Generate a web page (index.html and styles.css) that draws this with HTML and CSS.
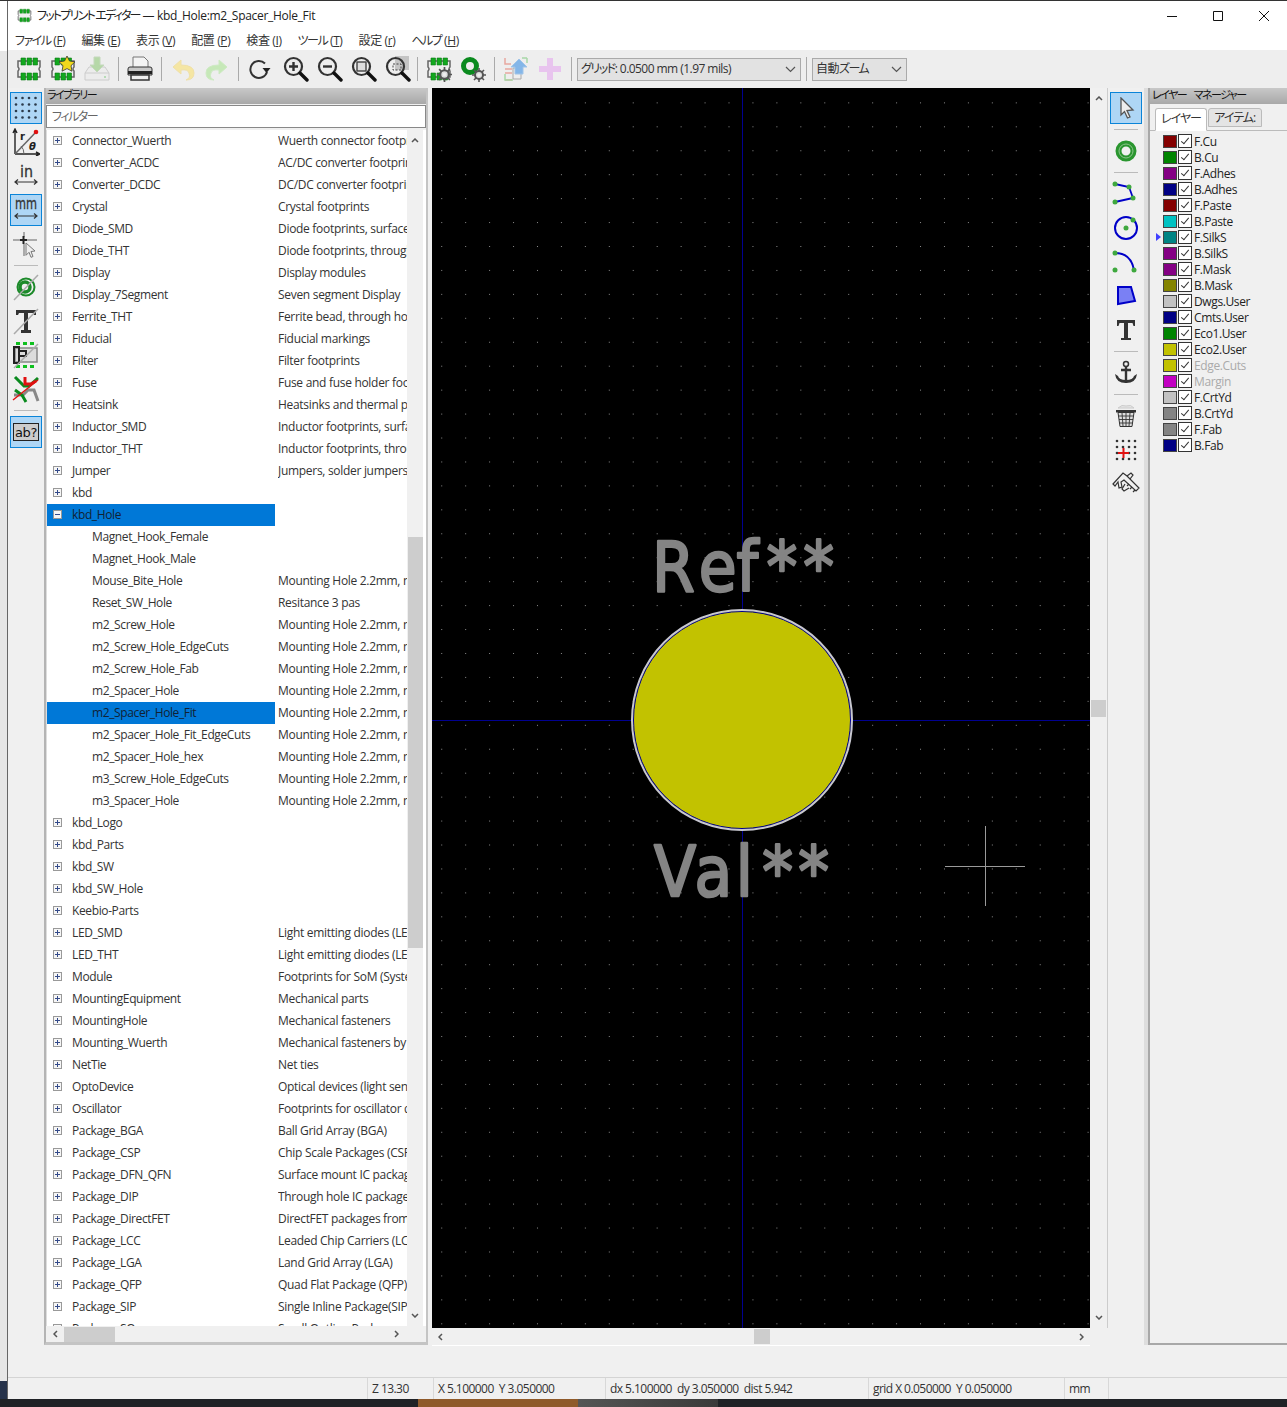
FILE: index.html
```html
<!DOCTYPE html>
<html lang="ja">
<head>
  <meta charset="UTF-8">
  <title>フットプリント エディター — kbd_Hole:m2_Spacer_Hole_Fit</title>
  <link rel="stylesheet" href="styles.css">
</head>
<body>
  <svg class="defs" width="0" height="0">
    <defs>
      <symbol id="chip" viewBox="0 0 26 26">
        <path d="M2 5h22v6q-2 2 0 4v6H2v-6q2-2 0-4z" fill="#efefef" stroke="#666" stroke-width="1.500"/>
        <path d="M5 2h4.500v7H5zM11 2h4.500v7H11zM17 2h4.500v7H17zM5 17h4.500v7H5zM11 17h4.500v7H11zM17 17h4.500v7H17z" fill="#12a81e" stroke="#0b7a14" stroke-width=".6"/>
      </symbol>
      <symbol id="gear" viewBox="0 0 14 14">
        <circle cx="7" cy="7" r="4" fill="#ddd" stroke="#555" stroke-width="2"/>
        <path d="M7 0v3M7 11v3M0 7h3M11 7h3M2 2l2 2M10 10l2 2M12 2l-2 2M4 10l-2 2" stroke="#555" stroke-width="1.600"/>
        <circle cx="7" cy="7" r="1.600" fill="#eee"/>
      </symbol>
      <symbol id="mag" viewBox="0 0 26 26">
        <circle cx="10.500" cy="10.500" r="8.500" fill="none" stroke="#333" stroke-width="2.200"/>
        <path d="M17 17l7 7" stroke="#111" stroke-width="3.400" stroke-linecap="round"/>
      </symbol>
      <symbol id="arrow" viewBox="0 0 8 5">
        <path d="M1 4l3-3 3 3" fill="none" stroke="#555" stroke-width="1.500"/>
      </symbol>
    </defs>
  </svg>

  <div class="desk-top"></div>
  <div class="desk-row">
    <div class="desk-left"></div>
    <div class="window">

      <div class="titlebar">
        <svg class="app-icon" width="15" height="15" viewBox="0 0 26 26"><use href="#chip"/></svg>
        <span class="title-text"><span class="kana">フットプリント エディター</span> — kbd_Hole:m2_Spacer_Hole_Fit</span>
        <div class="win-controls">
          <svg class="win-min" width="46" height="12" viewBox="0 0 46 12"><path d="M18 6.500h10" stroke="#111"/></svg>
          <svg class="win-max" width="46" height="12" viewBox="0 0 46 12"><path d="M18.500 1.500h9v9h-9z" fill="none" stroke="#111"/></svg>
          <svg class="win-close" width="46" height="12" viewBox="0 0 46 12"><path d="M18 1l10 10M28 1L18 11" stroke="#111"/></svg>
        </div>
      </div>

      <div class="menubar">
        <span><span class="kana">ファイル</span> (<u>F</u>)</span>
        <span>編集 (<u>E</u>)</span>
        <span>表示 (<u>V</u>)</span>
        <span>配置 (<u>P</u>)</span>
        <span>検査 (<u>I</u>)</span>
        <span><span class="kana">ツール</span> (<u>T</u>)</span>
        <span>設定 (<u>r</u>)</span>
        <span><span class="kana">ヘルプ</span> (<u>H</u>)</span>
      </div>

      <div class="toolbar">
        <div class="tb-btn"><svg width="26" height="26"><use href="#chip"/></svg></div>
        <div class="tb-btn">
          <svg width="26" height="26" viewBox="0 0 26 26">
            <use href="#chip"/>
            <path d="M17 0l2.500 5 5.500.8-4 3.900 1 5.500-5-2.600-5 2.600 1-5.500-4-3.900 5.500-.8z" fill="#f2d81c" stroke="#333" stroke-width=".8"/>
          </svg>
        </div>
        <div class="tb-btn">
          <svg width="26" height="26" viewBox="0 0 26 26">
            <path d="M1 17l4-6h16l4 6v7H1z" fill="#ececec" stroke="#ccc"/>
            <path d="M1 17h24" stroke="#ccc"/>
            <path d="M10 1h6v8h4l-7 7-7-7h4z" fill="#b6d8a8" stroke="#c4d8bc"/>
            <circle cx="21" cy="21" r="1" fill="#a5d6a5"/>
          </svg>
        </div>
        <div class="tb-sep"></div>
        <div class="tb-btn">
          <svg width="26" height="26" viewBox="0 0 26 26">
            <path d="M6 12V1h11l4 4v7z" fill="#f4f4f4" stroke="#777"/>
            <path d="M1 13q0-2 2-2h20q2 0 2 2v6H1z" fill="#c9c9c9" stroke="#333"/>
            <path d="M1 15h24v3H1z" fill="#222"/>
            <path d="M4 19h18v5H4z" fill="#eee" stroke="#333" stroke-width="1.500"/>
          </svg>
        </div>
        <div class="tb-sep"></div>
        <div class="tb-btn">
          <svg width="24" height="24" viewBox="0 0 24 24"><path d="M10 3L2 10l8 7v-4q7-1 8 3 2 5-3 7 8 0 8-7 0-8-13-8z" fill="#f5e6a3" stroke="#efe0a8"/></svg>
        </div>
        <div class="tb-btn">
          <svg width="24" height="24" viewBox="0 0 24 24"><path d="M14 3l8 7-8 7v-4q-7-1-8 3-2 5 3 7-8 0-8-7 0-8 13-8z" fill="#c6e8b8" stroke="#cdeac2"/></svg>
        </div>
        <div class="tb-sep"></div>
        <div class="tb-btn">
          <svg width="24" height="24" viewBox="0 0 24 24"><path d="M17 6.500A8.500 8.500 0 1 0 19 15" fill="none" stroke="#333" stroke-width="2"/><path d="M14.500 11h8l-4 5z" fill="#222"/></svg>
        </div>
        <div class="tb-btn mag-right">
          <svg width="26" height="26" viewBox="0 0 26 26"><use href="#mag"/><path d="M6 10.500h9M10.500 6v9" stroke="#333" stroke-width="2.400"/></svg>
        </div>
        <div class="tb-btn mag-right">
          <svg width="26" height="26" viewBox="0 0 26 26"><use href="#mag"/><path d="M6 10.500h9" stroke="#333" stroke-width="2.400"/></svg>
        </div>
        <div class="tb-btn mag-right">
          <svg width="26" height="26" viewBox="0 0 26 26"><use href="#mag"/><rect x="6" y="6" width="9" height="9" fill="#ddd" stroke="#444" stroke-width="1.400"/></svg>
        </div>
        <div class="tb-btn mag-right">
          <svg width="26" height="26" viewBox="0 0 26 26"><rect x="10" y="0" width="14" height="14" fill="#c4c4c4"/><use href="#mag"/><path d="M8 8h8v6H8z" fill="none" stroke="#444" stroke-dasharray="2 1.500"/></svg>
        </div>
        <div class="tb-sep"></div>
        <div class="tb-btn">
          <svg width="26" height="26" viewBox="0 0 26 26"><use href="#chip"/><use href="#gear" x="11" y="11" width="15" height="15"/></svg>
        </div>
        <div class="tb-btn">
          <svg width="26" height="26" viewBox="0 0 26 26">
            <circle cx="10" cy="10" r="6.500" fill="none" stroke="#0a8a1e" stroke-width="5"/>
            <use href="#gear" x="12" y="12" width="14" height="14"/>
          </svg>
        </div>
        <div class="tb-sep"></div>
        <div class="tb-btn">
          <svg width="26" height="26" viewBox="0 0 26 26">
            <path d="M2 2v6h6M2 13h7M2 17h7M2 24h7" fill="none" stroke="#e8a8a0" stroke-width="1.500"/>
            <path d="M2 18v6h8" fill="none" stroke="#a8d8a8" stroke-width="1.500"/>
            <path d="M24 2v5M19 2h5" stroke="#a8d8a8" stroke-width="1.500"/>
            <path d="M10 12h8v11h-8z" fill="#eee" stroke="#aaa"/>
            <path d="M16 3l8 8h-4v7h-8v-7H8z" fill="#84b6e8" stroke="#a0c4e8"/>
          </svg>
        </div>
        <div class="tb-btn">
          <svg width="24" height="24" viewBox="0 0 24 24"><path d="M9 1h6v8h8v6h-8v8H9v-8H1V9h8z" fill="#e8c4ee"/></svg>
        </div>
        <div class="tb-sep"></div>
        <div class="combo combo-grid"><span><span class="kana">グリッド</span>: 0.0500 mm (1.97 mils)</span><svg width="11" height="7" viewBox="0 0 11 7"><path d="M1 1l4.500 4.500L10 1" fill="none" stroke="#555" stroke-width="1.200"/></svg></div>
        <div class="tb-sep tb-sep-combo"></div>
        <div class="combo combo-zoom"><span>自動<span class="kana">ズーム</span></span><svg width="11" height="7" viewBox="0 0 11 7"><path d="M1 1l4.500 4.500L10 1" fill="none" stroke="#555" stroke-width="1.200"/></svg></div>
      </div>

      <div class="main">
        <div class="left-tools">
          <div class="tool on">
            <svg width="26" height="26" viewBox="0 0 26 26"><g fill="#2b3a4a"><circle cx="3" cy="3" r="1.300"/><circle cx="9.500" cy="3" r="1.300"/><circle cx="16" cy="3" r="1.300"/><circle cx="22.500" cy="3" r="1.300"/><circle cx="3" cy="9.500" r="1.300"/><circle cx="9.500" cy="9.500" r="1.300"/><circle cx="16" cy="9.500" r="1.300"/><circle cx="22.500" cy="9.500" r="1.300"/><circle cx="3" cy="16" r="1.300"/><circle cx="9.500" cy="16" r="1.300"/><circle cx="16" cy="16" r="1.300"/><circle cx="22.500" cy="16" r="1.300"/><circle cx="3" cy="22.500" r="1.300"/><circle cx="9.500" cy="22.500" r="1.300"/><circle cx="16" cy="22.500" r="1.300"/><circle cx="22.500" cy="22.500" r="1.300"/></g></svg>
          </div>
          <div class="tool">
            <svg width="28" height="28" viewBox="0 0 28 28">
              <path d="M3 2v24M3 26h24M1 5l2-4 2 4M24 24l4 2-4 2" fill="none" stroke="#222" stroke-width="1.400"/>
              <path d="M3 26L24 4" stroke="#666" stroke-width="1.500"/>
              <circle cx="24" cy="4" r="2.300" fill="#e01010"/>
              <path d="M12 26q0-5-3-8" fill="none" stroke="#666"/>
              <text class="polar-r" x="8" y="12">r</text>
              <text class="polar-t" x="17" y="22">θ</text>
            </svg>
          </div>
          <div class="tool">
            <svg width="28" height="28" viewBox="0 0 28 28">
              <text class="unit-text" x="8" y="15" textLength="13" lengthAdjust="spacingAndGlyphs">in</text>
              <path d="M3 20h22M6 17.500L3 20l3 2.500M22 17.500l3 2.500-3 2.500" fill="none" stroke="#333" stroke-width="1.200"/>
            </svg>
          </div>
          <div class="tool on">
            <svg width="28" height="28" viewBox="0 0 28 28">
              <text class="unit-text" x="3" y="13" textLength="22" lengthAdjust="spacingAndGlyphs">mm</text>
              <path d="M3 20h22M6 17.500L3 20l3 2.500M22 17.500l3 2.500-3 2.500" fill="none" stroke="#333" stroke-width="1.200"/>
            </svg>
          </div>
          <div class="tool">
            <svg width="28" height="28" viewBox="0 0 28 28">
              <path d="M1 10h8M15 10h10M12 2v5M12 14v12" stroke="#aaa" stroke-width="2"/>
              <path d="M8 10h7M11.500 6v8" stroke="#222" stroke-width="2"/>
              <path d="M14 13l9 8-4 .5 2 5-2 .8-2-5-3 3z" fill="#eee" stroke="#777"/>
            </svg>
          </div>
          <div class="tool-sep"></div>
          <div class="tool">
            <svg width="28" height="28" viewBox="0 0 28 28">
              <circle cx="14" cy="14" r="8.500" fill="none" stroke="#1c8a2a" stroke-width="2"/>
              <circle cx="13" cy="14" r="5" fill="none" stroke="#1c8a2a" stroke-width="3.500"/>
              <path d="M2 27L26 2" stroke="#aaa" stroke-width="1.500"/>
            </svg>
          </div>
          <div class="tool">
            <svg width="28" height="28" viewBox="0 0 28 28">
              <path d="M4 3h20v5h-2l-1-2h-5v17h3v3H9v-3h3V6H7L6 8H4z" fill="#333"/>
              <path d="M2 27L26 2" stroke="#aaa" stroke-width="1.500"/>
            </svg>
          </div>
          <div class="tool">
            <svg width="28" height="28" viewBox="0 0 28 28">
              <path d="M4 1h4v3H4zM11 1h4v3h-4zM18 1h4v3h-4zM4 24h4v3H4zM11 24h4v3h-4zM18 24h4v3h-4z" fill="#0fc01f"/>
              <path d="M3 7h22v14H3z" fill="#ddd" stroke="#888" stroke-width="1.500"/>
              <path d="M2 6h5v16H2zM7 10h7v5H7z" fill="none" stroke="#222" stroke-width="2"/>
              <path d="M2 27L26 3" stroke="#aaa" stroke-width="1.500"/>
            </svg>
          </div>
          <div class="tool">
            <svg width="28" height="28" viewBox="0 0 28 28">
              <path d="M3 2l9 9 5 0 9-8" fill="none" stroke="#0a8a1e" stroke-width="3"/>
              <path d="M13 2v7h6l5-3" fill="none" stroke="#e01010" stroke-width="3"/>
              <path d="M2 20h9l5-5h6l4 11" fill="none" stroke="#888" stroke-width="3"/>
              <path d="M3 15l7 5 4 7" fill="none" stroke="#0a8a1e" stroke-width="3"/>
              <path d="M1 25L26 5" stroke="#e01010" stroke-width="1.500"/>
            </svg>
          </div>
          <div class="tool-sep"></div>
          <div class="tool on">
            <svg width="26" height="18" viewBox="0 0 26 18"><rect x=".5" y=".5" width="25" height="17" fill="#ccc" stroke="#222"/><text class="ab-text" x="13" y="14" text-anchor="middle">ab?</text></svg>
          </div>
        </div>

        <div class="lib-panel">
          <div class="caption"><span class="kana">ライブラリー</span></div>
          <div class="filter"><span class="kana">フィルター</span></div>
          <div class="lib-body">
            <div class="lib-list">
              <div class="row"><i class="ex"></i><span class="name">Connector_Wuerth</span><span class="desc">Wuerth connector footprints</span></div>
              <div class="row"><i class="ex"></i><span class="name">Converter_ACDC</span><span class="desc">AC/DC converter footprints</span></div>
              <div class="row"><i class="ex"></i><span class="name">Converter_DCDC</span><span class="desc">DC/DC converter footprints</span></div>
              <div class="row"><i class="ex"></i><span class="name">Crystal</span><span class="desc">Crystal footprints</span></div>
              <div class="row"><i class="ex"></i><span class="name">Diode_SMD</span><span class="desc">Diode footprints, surface mount</span></div>
              <div class="row"><i class="ex"></i><span class="name">Diode_THT</span><span class="desc">Diode footprints, through hole</span></div>
              <div class="row"><i class="ex"></i><span class="name">Display</span><span class="desc">Display modules</span></div>
              <div class="row"><i class="ex"></i><span class="name">Display_7Segment</span><span class="desc">Seven segment Display</span></div>
              <div class="row"><i class="ex"></i><span class="name">Ferrite_THT</span><span class="desc">Ferrite bead, through hole</span></div>
              <div class="row"><i class="ex"></i><span class="name">Fiducial</span><span class="desc">Fiducial markings</span></div>
              <div class="row"><i class="ex"></i><span class="name">Filter</span><span class="desc">Filter footprints</span></div>
              <div class="row"><i class="ex"></i><span class="name">Fuse</span><span class="desc">Fuse and fuse holder footprints</span></div>
              <div class="row"><i class="ex"></i><span class="name">Heatsink</span><span class="desc">Heatsinks and thermal pads</span></div>
              <div class="row"><i class="ex"></i><span class="name">Inductor_SMD</span><span class="desc">Inductor footprints, surface mount</span></div>
              <div class="row"><i class="ex"></i><span class="name">Inductor_THT</span><span class="desc">Inductor footprints, through hole</span></div>
              <div class="row"><i class="ex"></i><span class="name">Jumper</span><span class="desc">Jumpers, solder jumpers, headers</span></div>
              <div class="row"><i class="ex"></i><span class="name">kbd</span><span class="desc"></span></div>
              <div class="row sel"><i class="ex open"></i><span class="name">kbd_Hole</span><span class="desc"></span></div>
              <div class="row child"><span class="name">Magnet_Hook_Female</span><span class="desc"></span></div>
              <div class="row child"><span class="name">Magnet_Hook_Male</span><span class="desc"></span></div>
              <div class="row child"><span class="name">Mouse_Bite_Hole</span><span class="desc">Mounting Hole 2.2mm, no annular</span></div>
              <div class="row child"><span class="name">Reset_SW_Hole</span><span class="desc">Resitance 3 pas</span></div>
              <div class="row child"><span class="name">m2_Screw_Hole</span><span class="desc">Mounting Hole 2.2mm, no annular</span></div>
              <div class="row child"><span class="name">m2_Screw_Hole_EdgeCuts</span><span class="desc">Mounting Hole 2.2mm, no annular</span></div>
              <div class="row child"><span class="name">m2_Screw_Hole_Fab</span><span class="desc">Mounting Hole 2.2mm, no annular</span></div>
              <div class="row child"><span class="name">m2_Spacer_Hole</span><span class="desc">Mounting Hole 2.2mm, no annular</span></div>
              <div class="row child sel"><span class="name">m2_Spacer_Hole_Fit</span><span class="desc">Mounting Hole 2.2mm, no annular</span></div>
              <div class="row child"><span class="name">m2_Spacer_Hole_Fit_EdgeCuts</span><span class="desc">Mounting Hole 2.2mm, no annular</span></div>
              <div class="row child"><span class="name">m2_Spacer_Hole_hex</span><span class="desc">Mounting Hole 2.2mm, no annular</span></div>
              <div class="row child"><span class="name">m3_Screw_Hole_EdgeCuts</span><span class="desc">Mounting Hole 2.2mm, no annular</span></div>
              <div class="row child"><span class="name">m3_Spacer_Hole</span><span class="desc">Mounting Hole 2.2mm, no annular</span></div>
              <div class="row"><i class="ex"></i><span class="name">kbd_Logo</span><span class="desc"></span></div>
              <div class="row"><i class="ex"></i><span class="name">kbd_Parts</span><span class="desc"></span></div>
              <div class="row"><i class="ex"></i><span class="name">kbd_SW</span><span class="desc"></span></div>
              <div class="row"><i class="ex"></i><span class="name">kbd_SW_Hole</span><span class="desc"></span></div>
              <div class="row"><i class="ex"></i><span class="name">Keebio-Parts</span><span class="desc"></span></div>
              <div class="row"><i class="ex"></i><span class="name">LED_SMD</span><span class="desc">Light emitting diodes (LEDs)</span></div>
              <div class="row"><i class="ex"></i><span class="name">LED_THT</span><span class="desc">Light emitting diodes (LEDs)</span></div>
              <div class="row"><i class="ex"></i><span class="name">Module</span><span class="desc">Footprints for SoM (System on Module)</span></div>
              <div class="row"><i class="ex"></i><span class="name">MountingEquipment</span><span class="desc">Mechanical parts</span></div>
              <div class="row"><i class="ex"></i><span class="name">MountingHole</span><span class="desc">Mechanical fasteners</span></div>
              <div class="row"><i class="ex"></i><span class="name">Mounting_Wuerth</span><span class="desc">Mechanical fasteners by Wuerth</span></div>
              <div class="row"><i class="ex"></i><span class="name">NetTie</span><span class="desc">Net ties</span></div>
              <div class="row"><i class="ex"></i><span class="name">OptoDevice</span><span class="desc">Optical devices (light sensors)</span></div>
              <div class="row"><i class="ex"></i><span class="name">Oscillator</span><span class="desc">Footprints for oscillator devices</span></div>
              <div class="row"><i class="ex"></i><span class="name">Package_BGA</span><span class="desc">Ball Grid Array (BGA)</span></div>
              <div class="row"><i class="ex"></i><span class="name">Package_CSP</span><span class="desc">Chip Scale Packages (CSP)</span></div>
              <div class="row"><i class="ex"></i><span class="name">Package_DFN_QFN</span><span class="desc">Surface mount IC packages</span></div>
              <div class="row"><i class="ex"></i><span class="name">Package_DIP</span><span class="desc">Through hole IC packages</span></div>
              <div class="row"><i class="ex"></i><span class="name">Package_DirectFET</span><span class="desc">DirectFET packages from</span></div>
              <div class="row"><i class="ex"></i><span class="name">Package_LCC</span><span class="desc">Leaded Chip Carriers (LCC)</span></div>
              <div class="row"><i class="ex"></i><span class="name">Package_LGA</span><span class="desc">Land Grid Array (LGA)</span></div>
              <div class="row"><i class="ex"></i><span class="name">Package_QFP</span><span class="desc">Quad Flat Package (QFP)</span></div>
              <div class="row"><i class="ex"></i><span class="name">Package_SIP</span><span class="desc">Single Inline Package(SIP)</span></div>
              <div class="row"><i class="ex"></i><span class="name">Package_SO</span><span class="desc">Small Outline Packages</span></div>
            </div>
            <div class="vscroll">
              <svg class="arrow-up" width="8" height="5"><use href="#arrow"/></svg>
              <div class="vthumb"></div>
              <svg class="arrow-down" width="8" height="5"><use href="#arrow"/></svg>
            </div>
          </div>
          <div class="hscroll">
            <svg class="arrow-left" width="5" height="8" viewBox="0 0 5 8"><path d="M4 1L1 4l3 3" fill="none" stroke="#555" stroke-width="1.500"/></svg>
            <div class="hthumb"></div>
            <svg class="arrow-right" width="5" height="8" viewBox="0 0 5 8"><path d="M1 1l3 3-3 3" fill="none" stroke="#555" stroke-width="1.500"/></svg>
          </div>
        </div>

        <div class="canvas-col">
          <div class="canvas-row">
            <svg class="canvas" width="658" height="1240" viewBox="432 88 658 1240">
              <defs>
                <pattern id="dots" x="10.300" y="6.600" width="23.940" height="23.940" patternUnits="userSpaceOnUse">
                  <rect width="1" height="1" fill="#8a8a8a"/>
                </pattern>
              </defs>
              <rect x="432" y="88" width="658" height="1240" fill="#000"/>
              <rect x="432" y="88" width="658" height="1240" fill="url(#dots)"/>
              <path class="axis" d="M742.500 88v1240M432 720.500h658"/>
              <circle cx="742" cy="720" r="108.500" fill="#c2c200" stroke="#000090"/>
              <circle cx="742" cy="720" r="110" fill="none" stroke="#c8c8d0" stroke-width="2"/>
              <g transform="translate(652 591) scale(.88 1)">
                <text class="fp-text" x="0 53 96 130 172">Ref**</text>
              </g>
              <g transform="translate(654 896) scale(.88 1)">
                <text class="fp-text" x="0 46 93 123 164">Val**</text>
              </g>
              <path class="axis-cursor" d="M945 866.500h80M985.500 826v80"/>
            </svg>
            <div class="canvas-vscroll">
              <svg class="arrow-up" width="8" height="5"><use href="#arrow"/></svg>
              <div class="canvas-vthumb"></div>
              <svg class="arrow-down" width="8" height="5"><use href="#arrow"/></svg>
            </div>
          </div>
          <div class="canvas-hscroll">
            <svg class="arrow-left" width="5" height="8" viewBox="0 0 5 8"><path d="M4 1L1 4l3 3" fill="none" stroke="#555" stroke-width="1.500"/></svg>
            <div class="canvas-hthumb"></div>
            <svg class="arrow-right" width="5" height="8" viewBox="0 0 5 8"><path d="M1 1l3 3-3 3" fill="none" stroke="#555" stroke-width="1.500"/></svg>
          </div>
        </div>

        <div class="right-tools">
          <div class="tool on">
            <svg width="20" height="22" viewBox="0 0 20 22"><path d="M5 1l12 12-6 .5 3 6.500-2.500 1-3-6.500L5 18z" fill="#eee" stroke="#555" stroke-width="1.300"/></svg>
          </div>
          <div class="tool-sep"></div>
          <div class="tool">
            <svg width="24" height="24" viewBox="0 0 24 24"><circle cx="12" cy="12" r="7.500" fill="none" stroke="#2a962f" stroke-width="6"/><circle cx="12" cy="12" r="7" fill="none" stroke="#8cc48c"/></svg>
          </div>
          <div class="tool-sep"></div>
          <div class="tool">
            <svg width="28" height="28" viewBox="0 0 28 28">
              <path d="M3 4l14 3 4 11L3 22" fill="none" stroke="#0000c8" stroke-width="1.800"/>
              <circle cx="3" cy="4" r="2.500" fill="#3ea83e"/><circle cx="17" cy="7" r="2.500" fill="#3ea83e"/><circle cx="21" cy="18" r="2.500" fill="#3ea83e"/><circle cx="3" cy="22" r="2.500" fill="#3ea83e"/>
            </svg>
          </div>
          <div class="tool">
            <svg width="26" height="26" viewBox="0 0 26 26">
              <circle cx="13" cy="13" r="11" fill="none" stroke="#0000c8" stroke-width="2"/>
              <circle cx="13" cy="13" r="2.500" fill="#3ea83e"/><circle cx="20" cy="5" r="2.500" fill="#3ea83e"/>
            </svg>
          </div>
          <div class="tool">
            <svg width="28" height="28" viewBox="0 0 28 28">
              <path d="M3 5q16 0 19 17" fill="none" stroke="#0000c8" stroke-width="2"/>
              <circle cx="3" cy="5" r="2.500" fill="#3ea83e"/><circle cx="3" cy="22" r="2.500" fill="#3ea83e"/><circle cx="22" cy="22" r="2.500" fill="#3ea83e"/>
            </svg>
          </div>
          <div class="tool">
            <svg width="22" height="22" viewBox="0 0 22 22"><path d="M3 2h13l4 14-17 3z" fill="#7a80f4" stroke="#0000c8" stroke-width="2"/></svg>
          </div>
          <div class="tool">
            <svg width="22" height="24" viewBox="0 0 22 24"><path d="M2 2h18v6h-1.500l-1-3H13v15h3v2H6v-2h3V5H4.500l-1 3H2z" fill="#333"/></svg>
          </div>
          <div class="tool-sep"></div>
          <div class="tool">
            <svg width="24" height="26" viewBox="0 0 24 26">
              <circle cx="12" cy="4" r="2.500" fill="none" stroke="#333" stroke-width="1.500"/>
              <path d="M12 6v17M7 10h10" stroke="#333" stroke-width="2.400"/>
              <path d="M1 14q1 9 11 9t11-9l-3 2q-1 4-8 4t-8-4z" fill="#333"/>
            </svg>
          </div>
          <div class="tool-sep"></div>
          <div class="tool">
            <svg width="22" height="26" viewBox="0 0 22 26">
              <path d="M3 5q4-4 8-2 5-2 8 2z" fill="#e4e4e4" stroke="#ccc"/>
              <path d="M1 7h20v2.500H1z" fill="#333"/>
              <path d="M3 9.500l2 14h12l2-14z" fill="#ddd" stroke="#333"/>
              <path d="M3.500 13h15M4 16.500h14M4.500 20h13M7 10l1 13M11 10v13M15 10l-1 13" stroke="#333" stroke-width=".9"/>
            </svg>
          </div>
          <div class="tool">
            <svg width="24" height="24" viewBox="0 0 24 24">
              <g fill="#333"><circle cx="3" cy="3" r="1.300"/><circle cx="9" cy="3" r="1.300"/><circle cx="15" cy="3" r="1.300"/><circle cx="21" cy="3" r="1.300"/><circle cx="3" cy="9" r="1.300"/><circle cx="9" cy="9" r="1.300"/><circle cx="15" cy="9" r="1.300"/><circle cx="21" cy="9" r="1.300"/><circle cx="3" cy="15" r="1.300"/><circle cx="15" cy="15" r="1.300"/><circle cx="21" cy="15" r="1.300"/><circle cx="3" cy="21" r="1.300"/><circle cx="9" cy="21" r="1.300"/><circle cx="15" cy="21" r="1.300"/><circle cx="21" cy="21" r="1.300"/></g>
              <path d="M4 15h11M9.500 10v10" stroke="#e01010" stroke-width="2"/>
            </svg>
          </div>
          <div class="tool">
            <svg width="28" height="28" viewBox="0 0 28 28" fill="none" stroke="#333" stroke-width="1.200">
              <path d="M1 14L11 3l4 3 12 12-3 3L12 10l-3 2 1 5-3 1-1-6-3 4z"/>
              <path d="M15 6l4-3 2 2-3 4M13 14l-3 5 2 2 5-3M17 14l-2 2M20 17l-2 2M23 20l-2 2"/>
            </svg>
          </div>
        </div>

        <div class="layer-panel">
          <div class="caption"><span class="kana">レイヤー マネージャー</span></div>
          <div class="tabs">
            <div class="tab active"><span class="kana">レイヤー</span></div>
            <div class="tab"><span class="kana">アイテム</span>:</div>
          </div>
          <div class="layers">
            <div class="layer"><i class="swatch c-red"></i><i class="cb"></i><span>F.Cu</span></div>
            <div class="layer"><i class="swatch c-green"></i><i class="cb"></i><span>B.Cu</span></div>
            <div class="layer"><i class="swatch c-purple"></i><i class="cb"></i><span>F.Adhes</span></div>
            <div class="layer"><i class="swatch c-navy"></i><i class="cb"></i><span>B.Adhes</span></div>
            <div class="layer"><i class="swatch c-red"></i><i class="cb"></i><span>F.Paste</span></div>
            <div class="layer"><i class="swatch c-cyan"></i><i class="cb"></i><span>B.Paste</span></div>
            <div class="layer current"><i class="swatch c-teal"></i><i class="cb"></i><span>F.SilkS</span></div>
            <div class="layer"><i class="swatch c-purple"></i><i class="cb"></i><span>B.SilkS</span></div>
            <div class="layer"><i class="swatch c-purple"></i><i class="cb"></i><span>F.Mask</span></div>
            <div class="layer"><i class="swatch c-olive"></i><i class="cb"></i><span>B.Mask</span></div>
            <div class="layer"><i class="swatch c-ltgrey"></i><i class="cb"></i><span>Dwgs.User</span></div>
            <div class="layer"><i class="swatch c-navy"></i><i class="cb"></i><span>Cmts.User</span></div>
            <div class="layer"><i class="swatch c-green"></i><i class="cb"></i><span>Eco1.User</span></div>
            <div class="layer"><i class="swatch c-yellow"></i><i class="cb"></i><span>Eco2.User</span></div>
            <div class="layer dim"><i class="swatch c-yellow"></i><i class="cb"></i><span>Edge.Cuts</span></div>
            <div class="layer dim"><i class="swatch c-magenta"></i><i class="cb"></i><span>Margin</span></div>
            <div class="layer"><i class="swatch c-ltgrey"></i><i class="cb"></i><span>F.CrtYd</span></div>
            <div class="layer"><i class="swatch c-grey"></i><i class="cb"></i><span>B.CrtYd</span></div>
            <div class="layer"><i class="swatch c-grey"></i><i class="cb"></i><span>F.Fab</span></div>
            <div class="layer"><i class="swatch c-navy"></i><i class="cb"></i><span>B.Fab</span></div>
          </div>
        </div>
      </div>

      <div class="blank"></div>

      <div class="statusbar">
        <div class="st st-first"></div>
        <div class="st st-zoom">Z 13.30</div>
        <div class="st st-pos">X 5.100000&nbsp; Y 3.050000</div>
        <div class="st st-delta">dx 5.100000&nbsp; dy 3.050000&nbsp; dist 5.942</div>
        <div class="st st-grid">grid X 0.050000&nbsp; Y 0.050000</div>
        <div class="st st-unit">mm</div>
        <div class="st st-last"></div>
      </div>
    </div>
  </div>
  <div class="taskbar">
    <div class="task-a"></div>
    <div class="task-b"></div>
  </div>
</body>
</html>
```

FILE: styles.css
```css
html, body {
  margin: 0;
  padding: 0;
  height: 1407px;
  overflow: hidden;
}
body {
  font-family: "Open Sans", "Noto Sans CJK JP", sans-serif;
  font-size: 12px;
  color: #222;
  background: #1f2226;
  letter-spacing: -0.38px;
  font-feature-settings: "palt";
}
.kana {
  letter-spacing: -1.5px;
}
.defs {
  position: absolute;
}
.desk-top {
  height: 1px;
  background: #333;
}
.desk-row {
  display: flex;
  height: 1398px;
}
.desk-left {
  width: 7px;
  background: linear-gradient(#fff 50px, #e6e6e6 50px, #e6e6e6 1380px, #26324a 1380px);
  border-right: 1px solid #666;
}
.window {
  width: 1279px;
  display: flex;
  flex-direction: column;
  background: #f0f0f0;
}

/* title + menu */
.titlebar {
  height: 29px;
  flex: none;
  display: flex;
  align-items: center;
  background: #fff;
  padding-left: 9px;
}
.app-icon {
  margin-right: 5px;
}
.title-text {
  font-size: 12px;
  letter-spacing: -0.3px;
  margin-top: -2px;
}
.title-text .kana {
  letter-spacing: -1.8px;
}
.win-controls {
  margin-left: auto;
  display: flex;
}
.win-controls svg {
  display: block;
}
.menubar {
  height: 20px;
  flex: none;
  display: flex;
  align-items: center;
  gap: 16px;
  background: #fff;
  padding-left: 7px;
  color: #333;
}

/* toolbar */
.toolbar {
  height: 38px;
  flex: none;
  display: flex;
  align-items: center;
  padding-left: 4px;
  background: #eee;
}
.tb-btn {
  width: 34px;
  height: 30px;
  display: flex;
  align-items: center;
  justify-content: center;
}
.mag-right svg {
  margin-left: 3px;
}
.tb-sep {
  width: 1px;
  height: 24px;
  margin: 0 4px;
  background: #aaa;
}
.tb-sep-combo {
  margin: 0 5px;
}
.combo {
  height: 21px;
  box-sizing: content-box;
  border: 1px solid #aaa;
  background: #e2e2e2;
  display: flex;
  align-items: center;
  justify-content: space-between;
  padding: 0 4px 0 3px;
  color: #333;
  letter-spacing: -0.55px;
}
.combo > span {
  margin-top: -2px;
}
.combo-grid {
  width: 215px;
  margin-left: 1px;
}
.combo-zoom {
  width: 86px;
}

/* main area */
.main {
  height: 1258px;
  flex: none;
  display: flex;
}
.left-tools {
  width: 36px;
  padding-top: 3px;
  display: flex;
  flex-direction: column;
  align-items: center;
}
.tool {
  width: 34px;
  height: 34px;
  box-sizing: border-box;
  flex: none;
  display: flex;
  align-items: center;
  justify-content: center;
}
.tool.on {
  width: 32px;
  height: 32px;
  margin: 1px 0;
  background: #aed6f5;
  border: 1px solid #0a84d8;
}
.tool-sep {
  width: 24px;
  height: 1px;
  background: #bbb;
  margin: 4px 0;
  flex: none;
}
.polar-r {
  font: bold 10px "DejaVu Sans", sans-serif;
  fill: #222;
}
.polar-t {
  font: italic bold 10px "DejaVu Sans", sans-serif;
  fill: #222;
}
.unit-text {
  font: 16px "DejaVu Sans", sans-serif;
  fill: #333;
  stroke: #333;
  stroke-width: 0.3px;
  letter-spacing: 0;
}
.ab-text {
  font: 13px "DejaVu Sans", sans-serif;
  fill: #111;
}

/* library */
.lib-panel {
  width: 384px;
  box-sizing: border-box;
  border-left: 2px solid #b4b4b4;
  border-right: 2px solid #c4c4c4;
  border-bottom: 3px solid #c4c4c4;
  display: flex;
  flex-direction: column;
  height: 1257px;
}
.caption {
  height: 16px;
  line-height: 13px;
  padding-left: 1px;
  background: linear-gradient(#c8c8c8, #a8a8a8);
  color: #111;
  font-size: 11px;
  flex: none;
}
.filter {
  height: 23px;
  box-sizing: border-box;
  margin-top: 1px;
  background: #fff;
  border: 1px solid #888;
  line-height: 21px;
  padding-left: 5px;
  color: #666;
  flex: none;
}
.lib-body {
  height: 1196px;
  margin-top: 2px;
  display: flex;
  background: #fff;
  border-left: 1px solid #ddd;
}
.lib-list {
  width: 360px;
  overflow: hidden;
}
.row {
  height: 22px;
  display: flex;
  color: #333;
}
.ex {
  width: 9px;
  height: 9px;
  flex: none;
  align-self: center;
  margin-left: 6px;
  margin-top: -1px;
  box-sizing: border-box;
  border: 1px solid #999;
  background:
    linear-gradient(#334a8a, #334a8a) center / 5px 1px no-repeat,
    linear-gradient(#334a8a, #334a8a) center / 1px 5px no-repeat,
    #f6f6f6;
}
.ex.open {
  background:
    linear-gradient(#334a8a, #334a8a) center / 5px 1px no-repeat,
    #f6f6f6;
}
.name {
  width: 213px;
  height: 22px;
  line-height: 22px;
  padding-left: 10px;
  box-sizing: border-box;
  flex: none;
  white-space: nowrap;
  overflow: hidden;
}
.child .name {
  width: 228px;
  padding-left: 45px;
}
.row.sel .name {
  color: #123;
}
.row.child.sel .name {
  background: #0078d7;
}
.row.sel:not(.child) {
  background: linear-gradient(90deg, #0078d7 228px, #fff 228px);
}
.desc {
  margin-left: 3px;
  flex: 1;
  min-width: 0;
  line-height: 22px;
  letter-spacing: -0.3px;
  white-space: nowrap;
  overflow: hidden;
}
.vscroll {
  width: 16px;
  flex: none;
  background: #f0f0f0;
  display: flex;
  flex-direction: column;
  align-items: center;
}
.vthumb {
  width: 15px;
  height: 411px;
  margin-top: 394px;
  background: #cdcdcd;
  flex: none;
}
.arrow-up {
  margin-top: 8px;
  flex: none;
}
.arrow-down {
  margin-top: auto;
  margin-bottom: 8px;
  transform: scaleY(-1);
  flex: none;
}
.hscroll {
  height: 16px;
  display: flex;
  align-items: center;
  margin-left: 1px;
  background: #f0f0f0;
}
.hscroll .arrow-left {
  margin-left: 6px;
}
.hthumb {
  width: 51px;
  height: 15px;
  margin-left: 6px;
  background: #cdcdcd;
}
.hscroll .arrow-right {
  margin-left: 279px;
}

/* canvas */
.canvas-col {
  width: 676px;
  margin-left: 4px;
}
.canvas-row {
  display: flex;
  height: 1240px;
}
.canvas {
  display: block;
  flex: none;
}
.axis {
  stroke: #000090;
  fill: none;
  shape-rendering: crispEdges;
}
.axis-cursor {
  stroke: #9a9a9a;
  fill: none;
  shape-rendering: crispEdges;
}
.fp-text {
  font: 70px "DejaVu Sans", sans-serif;
  fill: #848484;
  stroke: #848484;
  stroke-width: 2.5px;
  stroke-linejoin: round;
  letter-spacing: 0;
}
.canvas-vscroll {
  width: 18px;
  box-sizing: border-box;
  display: flex;
  flex-direction: column;
  align-items: center;
  border-right: 1px solid #ccc;
}
.canvas-vthumb {
  width: 15px;
  height: 17px;
  margin-top: 599px;
  background: #cdcdcd;
  flex: none;
}
.canvas-hscroll {
  width: 658px;
  height: 18px;
  box-sizing: border-box;
  border-bottom: 1px solid #fff;
  display: flex;
  align-items: center;
}
.canvas-hscroll .arrow-left {
  margin-left: 6px;
}
.canvas-hthumb {
  width: 16px;
  height: 15px;
  margin-left: 311px;
  background: #cdcdcd;
}
.canvas-hscroll .arrow-right {
  margin-left: 309px;
}

/* right tools */
.right-tools {
  width: 40px;
  box-sizing: border-box;
  height: 1257px;
  padding-top: 3px;
  display: flex;
  flex-direction: column;
  align-items: center;
  border-right: 4px solid #ddd;
}

/* layers */
.layer-panel {
  width: 139px;
  height: 1257px;
  box-sizing: border-box;
  border-left: 2px solid #a8a8a8;
  border-bottom: 2px solid #a8a8a8;
}
.layer-panel .caption {
  padding-left: 2px;
  word-spacing: 6px;
}
.tabs {
  display: flex;
  height: 27px;
  box-sizing: border-box;
  padding: 4px 0 0 5px;
  border-bottom: 1px solid #bbb;
  align-items: flex-end;
}
.tab {
  width: 54px;
  height: 19px;
  box-sizing: border-box;
  margin-bottom: 3px;
  border: 1px solid #bbb;
  border-radius: 3px 3px 0 0;
  background: #e4e4e4;
  text-align: center;
  line-height: 17px;
  color: #333;
}
.tab .kana {
  letter-spacing: -1px;
}
.tab.active {
  width: 52px;
  height: 23px;
  margin-bottom: -1px;
  margin-right: 1px;
  background: #fff;
  border-bottom-color: #fff;
  line-height: 20px;
}
.layers {
  padding-top: 2px;
}
.layer {
  height: 16px;
  display: flex;
  align-items: center;
  padding-left: 13px;
  position: relative;
  color: #222;
}
.layer.dim span {
  color: #aaa;
}
.layer.current::before {
  content: "";
  position: absolute;
  left: 6px;
  top: 4px;
  border-left: 5px solid #4040ff;
  border-top: 4px solid transparent;
  border-bottom: 4px solid transparent;
}
.swatch {
  width: 12px;
  height: 11px;
  border: 1px solid #444;
  box-sizing: content-box;
  flex: none;
}
.cb {
  width: 12px;
  height: 12px;
  margin-left: 1px;
  margin-right: 2px;
  flex: none;
  border: 1px solid #333;
  background: #fff;
  position: relative;
}
.cb::after {
  content: "";
  position: absolute;
  left: 4px;
  top: 1px;
  width: 3px;
  height: 7px;
  border-right: 1px solid #333;
  border-bottom: 1px solid #333;
  transform: rotate(40deg);
}
.c-red { background: #840000; }
.c-green { background: #008400; }
.c-purple { background: #840084; }
.c-navy { background: #000084; }
.c-cyan { background: #00c2c2; }
.c-teal { background: #008484; }
.c-olive { background: #848400; }
.c-ltgrey { background: #c2c2c2; }
.c-yellow { background: #c2c200; }
.c-magenta { background: #c200c2; }
.c-grey { background: #848484; }

/* bottom */
.blank {
  height: 31px;
  flex: none;
}
.statusbar {
  height: 22px;
  flex: none;
  box-sizing: border-box;
  display: flex;
  border-top: 1px solid #d4d4d4;
  color: #333;
  background: #f0f0f0;
  letter-spacing: -0.55px;
}
.st {
  box-sizing: border-box;
  padding: 2px 0 0 4px;
  border-right: 1px solid #d8d8d8;
  white-space: nowrap;
}
.st-first { width: 360px; }
.st-zoom { width: 66px; }
.st-pos { width: 172px; }
.st-delta { width: 263px; }
.st-grid { width: 196px; }
.st-unit { width: 44px; }
.st-last { flex: 1; border-right: 0; }
.taskbar {
  height: 8px;
  display: flex;
  background: #1f2226;
}
.task-a {
  width: 160px;
  margin-left: 418px;
  background: #8f5a2a;
}
.task-b {
  width: 140px;
  background: linear-gradient(90deg, #555, #3a3a3a);
}
```
